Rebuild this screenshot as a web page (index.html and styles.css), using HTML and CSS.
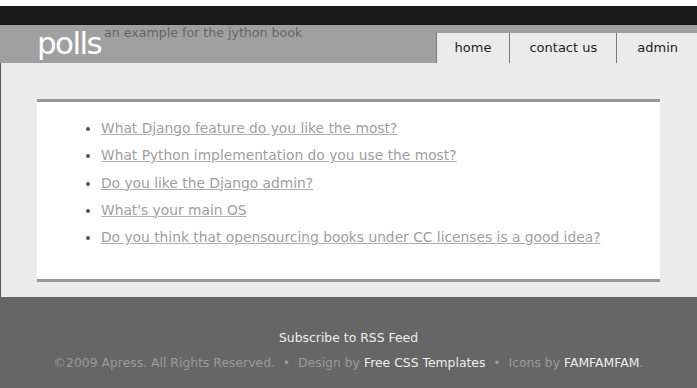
FILE: index.html
```html
<!DOCTYPE html>
<html lang="en">
<head>
    <meta charset="UTF-8">
    <title>polls</title>
    <link rel="stylesheet" href="styles.css">
</head>
<body>

    <div class="topbar"></div>

    <div class="header">
        <div class="logo">
            <h1>polls</h1>
            <span class="tagline">an example for the jython book</span>
        </div>
        <ul class="nav">
            <li><a href="#">home</a></li>
            <li><a href="#">contact us</a></li>
            <li><a href="#">admin</a></li>
        </ul>
    </div>

    <div class="main">
        <div class="content">
            <ul class="polls">
                <li><a href="#">What Django feature do you like the most?</a></li>
                <li><a href="#">What Python implementation do you use the most?</a></li>
                <li><a href="#">Do you like the Django admin?</a></li>
                <li><a href="#">What's your main OS</a></li>
                <li><a href="#">Do you think that opensourcing books under CC licenses is a good idea?</a></li>
            </ul>
        </div>
    </div>

    <div class="footer">
        <p class="rss"><a href="#">Subscribe to RSS Feed</a></p>
        <p class="legal">&copy;2009 Apress. All Rights Reserved. &nbsp;&bull;&nbsp; Design by <a href="#">Free CSS Templates</a> &nbsp;&bull;&nbsp; Icons by <a href="#">FAMFAMFAM</a>.</p>
    </div>

</body>
</html>
```

FILE: styles.css
```css
/* General Styles */
body {
    margin: 0;
    background: #ebebeb;
    font-family: 'DejaVu Sans', sans-serif;
}

.topbar {
    height: 19px;
    border-top: 6px solid #fff;
    background: #181818;
}

/* Header */
.header {
    display: flex;
    justify-content: space-between;
    height: 38px;
    background: #a0a0a0;
}

.logo {
    display: flex;
    align-items: flex-start;
    padding-left: 37px;
}

.logo h1 {
    margin: 0;
    font-size: 31px;
    font-weight: normal;
    line-height: 36px;
    color: #fff;
    letter-spacing: -1.6px;
}

.tagline {
    margin-left: 3px;
    font-size: 12.6px;
    line-height: 16px;
    color: #666;
}

.nav {
    display: flex;
    align-self: flex-end;
    margin: 0;
    padding: 0;
    list-style: none;
    background: #ebebeb;
}

.nav li {
    border-left: 1px solid #7a7a7a;
}

.nav a {
    display: block;
    padding: 0 19px;
    line-height: 30px;
    font-size: 13px;
    color: #222;
    text-decoration: none;
}

.nav li:first-child a { padding: 0 18px; }
.nav li:last-child a { padding: 0 19px 0 20px; }

/* Content */
.main {
    padding: 36px 37px 15px 36px;
    border-left: 1px solid #555;
}

.content {
    background: #fff;
    border-top: 3px solid #999;
    border-bottom: 3px solid #999;
    padding: 13px 0 28px;
}

.polls {
    margin: 0;
    padding-left: 64px;
    font-size: 13.8px;
    line-height: 27.3px;
    color: #555;
}

.polls a {
    color: #a0a0a0;
    text-decoration-color: #b0b0b0;
}

/* Footer */
.footer {
    background: #666;
    padding: 28px 0 14px;
    text-align: center;
    font-size: 12.4px;
}

.footer p {
    margin: 0;
    line-height: 25px;
}

.rss a {
    color: #eee;
    text-decoration: none;
}

.legal {
    color: #9a9a9a;
}

.legal a {
    color: #eee;
    text-decoration: none;
}
```
